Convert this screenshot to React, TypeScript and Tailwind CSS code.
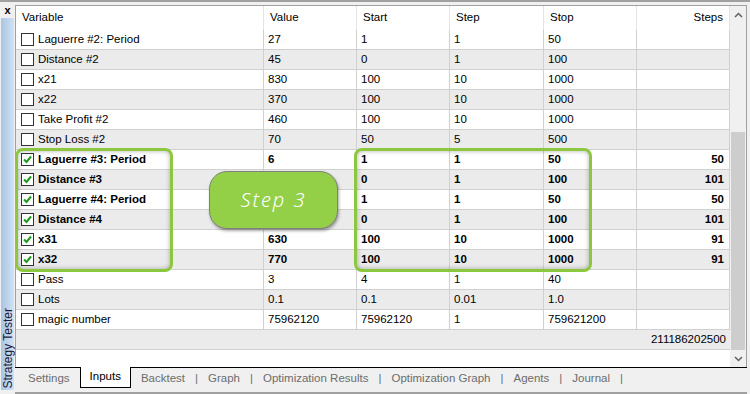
import React from 'react';

interface InputRow {
  name: string;
  value: string;
  start: string;
  step: string;
  stop: string;
  steps: string;
  on: boolean;
}

const rows: InputRow[] = [
  { name: 'Laguerre #2: Period', value: '27', start: '1', step: '1', stop: '50', steps: '', on: false },
  { name: 'Distance #2', value: '45', start: '0', step: '1', stop: '100', steps: '', on: false },
  { name: 'x21', value: '830', start: '100', step: '10', stop: '1000', steps: '', on: false },
  { name: 'x22', value: '370', start: '100', step: '10', stop: '1000', steps: '', on: false },
  { name: 'Take Profit #2', value: '460', start: '100', step: '10', stop: '1000', steps: '', on: false },
  { name: 'Stop Loss #2', value: '70', start: '50', step: '5', stop: '500', steps: '', on: false },
  { name: 'Laguerre #3: Period', value: '6', start: '1', step: '1', stop: '50', steps: '50', on: true },
  { name: 'Distance #3', value: '', start: '0', step: '1', stop: '100', steps: '101', on: true },
  { name: 'Laguerre #4: Period', value: '', start: '1', step: '1', stop: '50', steps: '50', on: true },
  { name: 'Distance #4', value: '', start: '0', step: '1', stop: '100', steps: '101', on: true },
  { name: 'x31', value: '630', start: '100', step: '10', stop: '1000', steps: '91', on: true },
  { name: 'x32', value: '770', start: '100', step: '10', stop: '1000', steps: '91', on: true },
  { name: 'Pass', value: '3', start: '4', step: '1', stop: '40', steps: '', on: false },
  { name: 'Lots', value: '0.1', start: '0.1', step: '0.01', stop: '1.0', steps: '', on: false },
  { name: 'magic number', value: '75962120', start: '75962120', step: '1', stop: '759621200', steps: '', on: false },
];

const tabs = ['Backtest', 'Graph', 'Optimization Results', 'Optimization Graph', 'Agents', 'Journal'];

const Checkbox: React.FC<{ checked: boolean }> = ({ checked }) => (
  <span className="w-[13px] h-[13px] border border-[#333333] bg-white flex items-center justify-center shrink-0">
    {checked && (
      <svg width="11" height="11" viewBox="0 0 11 11">
        <path d="M2 5.5 L4.5 8 L9 2.5" fill="none" stroke="#1e9a1e" strokeWidth="2" />
      </svg>
    )}
  </span>
);

const Chevron: React.FC<{ up: boolean }> = ({ up }) => (
  <svg width="9" height="6" viewBox="0 0 9 6">
    <polyline
      points={up ? '1,5 4.5,1.5 8,5' : '1,1 4.5,4.5 8,1'}
      fill="none"
      stroke="#606060"
      strokeWidth="1.5"
    />
  </svg>
);

const cell = 'border-r border-b border-[#d0d0d0] flex items-center pl-[4px] whitespace-nowrap overflow-hidden';

export default function App() {
  return (
    <div
      className="w-[750px] h-[394px] bg-[#f0f0f0] border-t-2 border-[#a0a0a0] flex text-[11.5px] text-black overflow-hidden"
      style={{ fontFamily: '"Liberation Sans", Arial, sans-serif' }}
    >
      {/* side dock strip */}
      <div className="w-[15px] flex flex-col">
        <div className="h-[16px] flex items-center justify-center text-[11px] font-bold leading-none">x</div>
        <div className="flex-1 mx-[1px] mb-[4px] bg-gradient-to-r from-[#a9c5e3] to-[#d2e2f2] flex flex-col justify-end items-center pb-[2px]">
          <span className="[writing-mode:vertical-rl] rotate-180 text-[12px] text-[#1b1b3a] leading-none whitespace-nowrap">
            Strategy Tester
          </span>
        </div>
      </div>

      <div className="flex-1 flex flex-col pt-[3px]">
        {/* table frame */}
        <div className="h-[362px] mr-[3px] border border-b-0 border-[#a0a0a0] bg-white flex">
          <div className="relative w-[714px] flex flex-col">
            <div className="grid grid-cols-[248px_93px_93px_94px_93px_93px] h-[24px]">
              {['Variable', 'Value', 'Start', 'Step', 'Stop'].map((h) => (
                <div key={h} className="border-r border-[#e4e4e4] flex items-center pl-[6px]">
                  {h}
                </div>
              ))}
              <div className="border-r border-[#e4e4e4] flex items-center justify-end pr-[6px]">Steps</div>
            </div>

            {rows.map((r, i) => (
              <div
                key={r.name}
                className={`grid grid-cols-[248px_93px_93px_94px_93px_93px] h-[20px] ${
                  i % 2 === 1 ? 'bg-[#ebebeb]' : 'bg-white'
                } ${r.on ? 'font-bold' : ''}`}
              >
                <div className={`${cell} pl-[5px] gap-[4px]`}>
                  <Checkbox checked={r.on} />
                  <span>{r.name}</span>
                </div>
                <div className={cell}>{r.value}</div>
                <div className={cell}>{r.start}</div>
                <div className={cell}>{r.step}</div>
                <div className={cell}>{r.stop}</div>
                <div className={`${cell} justify-end pr-[5px]`}>{r.steps}</div>
              </div>
            ))}

            <div className="h-[20px] bg-[#ebebeb] border-b border-[#d0d0d0] flex items-center justify-end pr-[4px]">
              211186202500
            </div>
            <div className="flex-1" />

            {/* highlight frames */}
            <div className="absolute left-[-1px] top-[142px] w-[158px] h-[124px] border-[3px] border-[#8dc63f] rounded-[8px] shadow-[inset_0_0_5px_rgba(0,0,0,0.3)] pointer-events-none" />
            <div className="absolute left-[338px] top-[142px] w-[238px] h-[124px] border-[3px] border-[#8dc63f] rounded-[8px] shadow-[inset_0_0_5px_rgba(0,0,0,0.3)] pointer-events-none" />

            {/* callout */}
            <div className="absolute left-[193px] top-[165px] w-[129px] h-[58px] bg-[#94cf48] border border-[#7f7f7f] rounded-[18px] shadow-[1px_2px_3px_rgba(0,0,0,0.35)] flex items-center justify-center">
              <span
                className="text-white text-[20px] italic font-light tracking-[2px]"
                style={{ fontFamily: '"Noto Sans", sans-serif' }}
              >
                Step 3
              </span>
            </div>
          </div>

          {/* vertical scrollbar */}
          <div className="w-[16px] bg-[#f0f0f0] flex flex-col">
            <div className="h-[17px] flex items-center justify-center">
              <Chevron up />
            </div>
            <div className="h-[109px]" />
            <div className="flex-1 mx-[1px] bg-[#cdcdcd]" />
            <div className="h-[17px] flex items-center justify-center">
              <Chevron up={false} />
            </div>
          </div>
        </div>

        {/* tab strip */}
        <div className="h-[27px] mr-[3px] border-t border-black border-b-2 border-b-[#a0a0a0] flex items-start text-[#6d6d6d]">
          <span className="pl-[13px] pr-[10px] h-[22px] flex items-center">Settings</span>
          <span className="-mt-px h-[21px] px-[9px] bg-white border border-t-0 border-black text-black flex items-center">
            Inputs
          </span>
          {tabs.map((t) => (
            <React.Fragment key={t}>
              <span className="px-[10px] h-[22px] flex items-center">{t}</span>
              <span className="h-[22px] flex items-center">|</span>
            </React.Fragment>
          ))}
        </div>
      </div>
    </div>
  );
}
